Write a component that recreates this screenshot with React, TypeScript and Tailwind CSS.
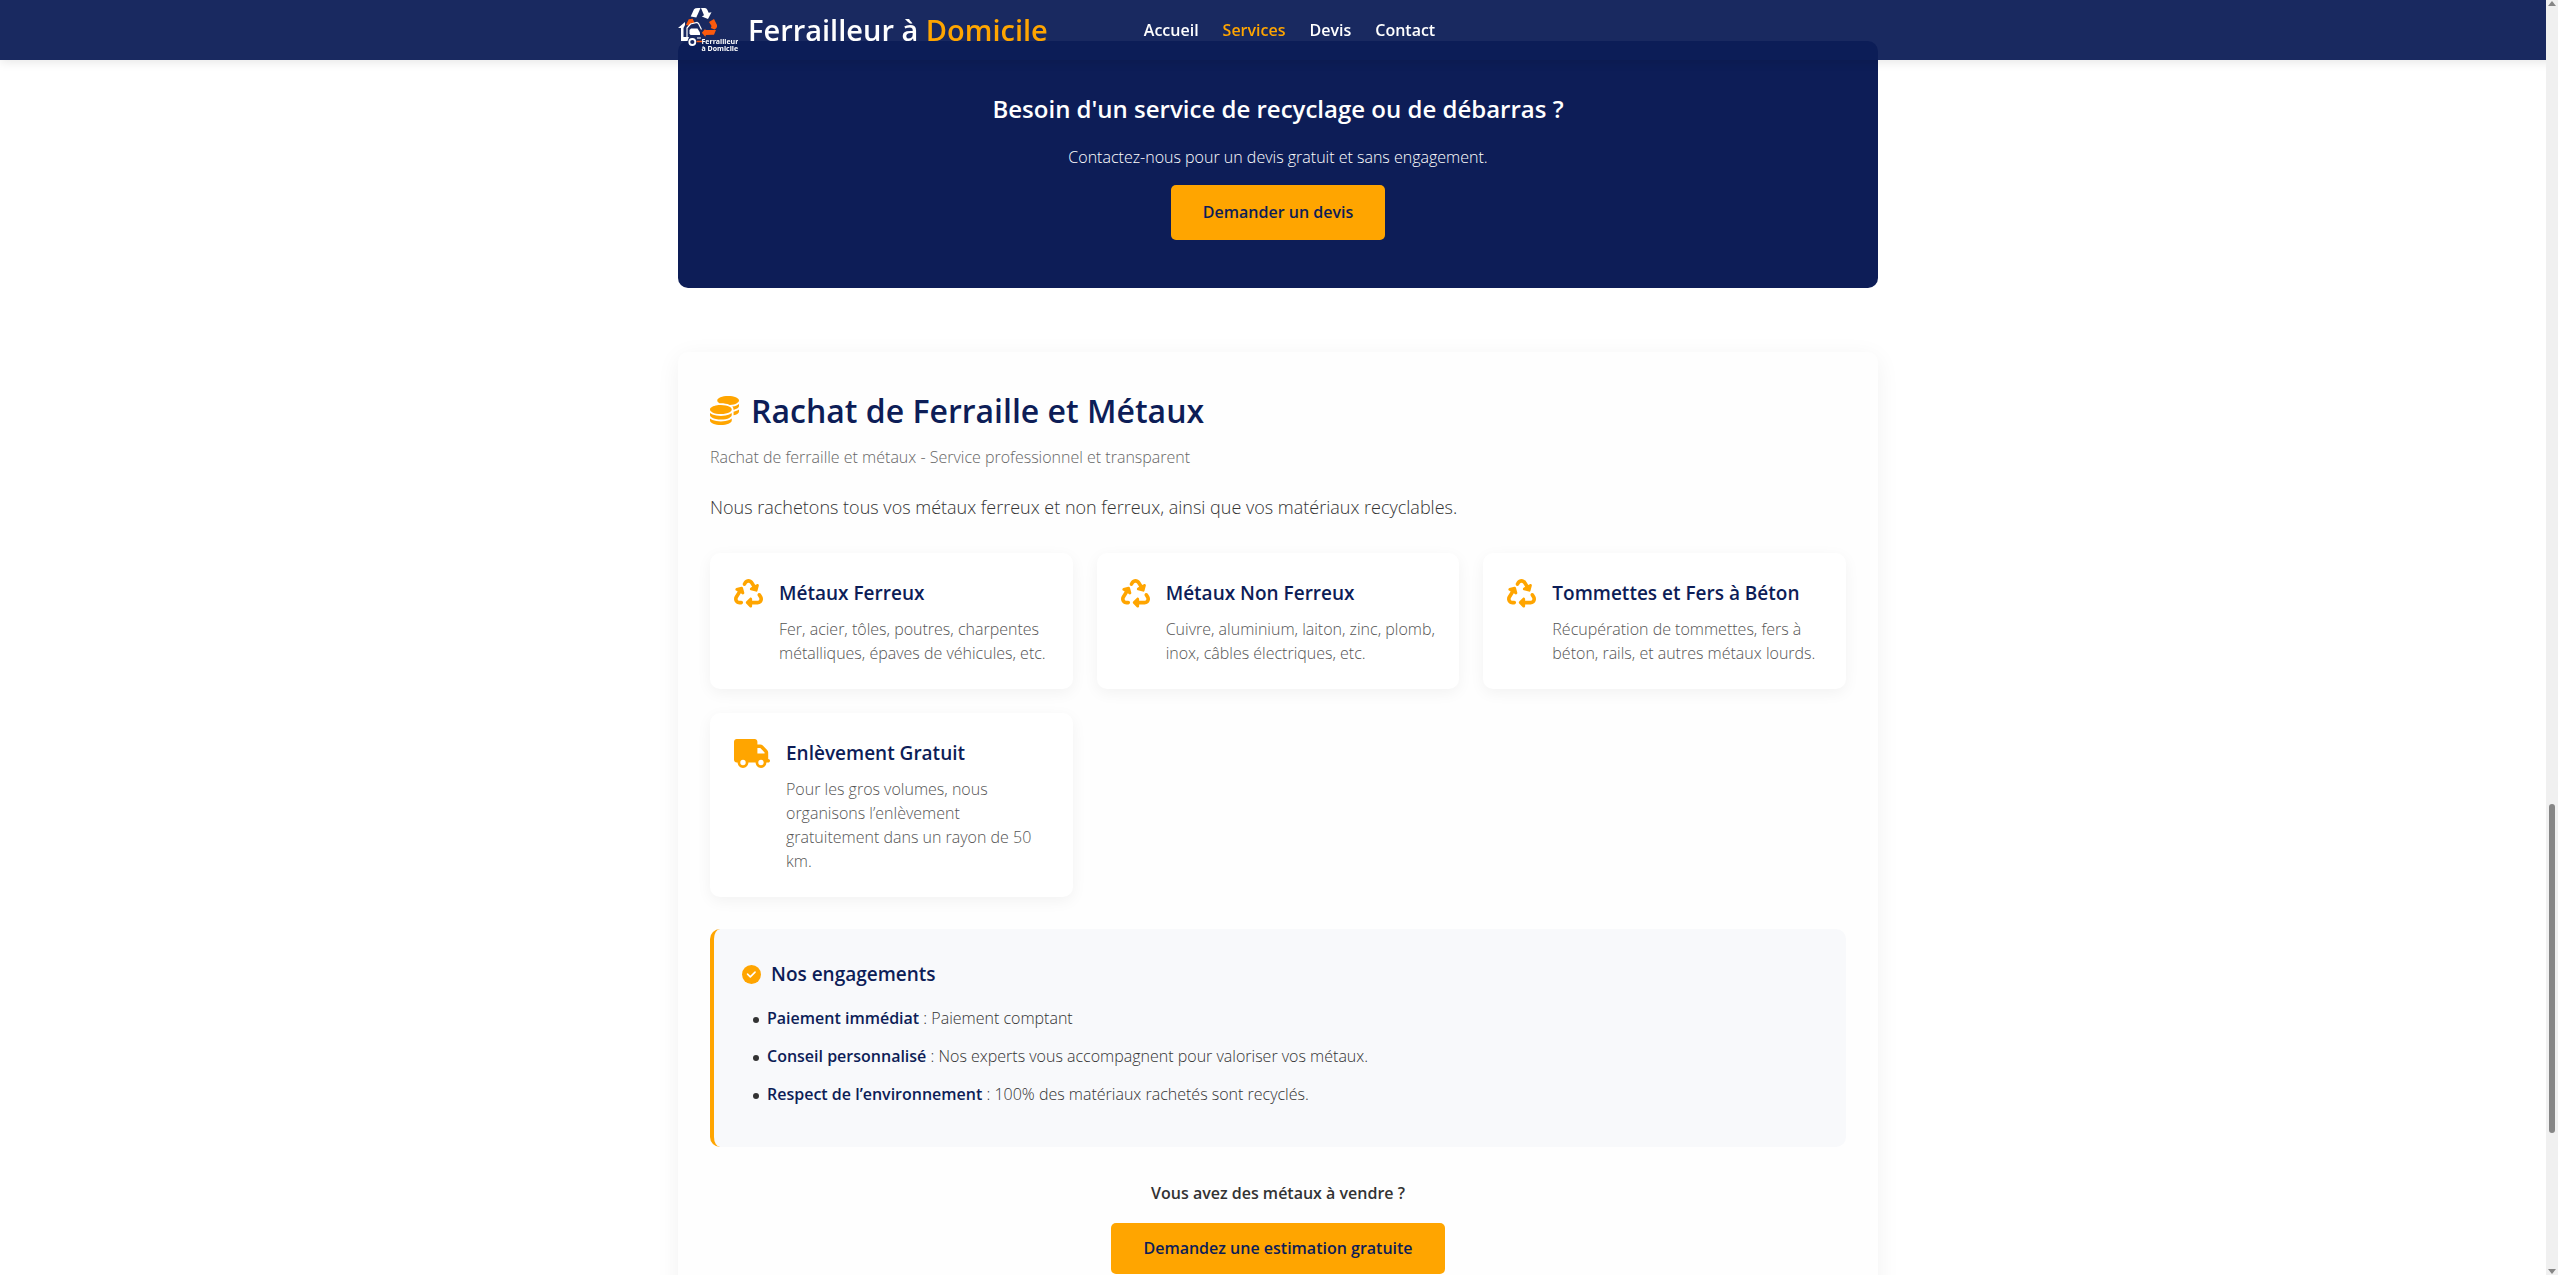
import type { IconType } from "react-icons";
import { FaCoins, FaRecycle, FaTruck } from "react-icons/fa6";

interface NavItem {
    label: string;
    href: string;
    active?: boolean;
}

interface ServiceItem {
    title: string;
    description: string;
    icon: IconType;
    iconClass: string;
}

const navItems: NavItem[] = [
    { label: "Accueil", href: "#accueil" },
    { label: "Services", href: "#services", active: true },
    { label: "Devis", href: "#devis" },
    { label: "Contact", href: "#contact" },
];

const services: ServiceItem[] = [
    {
        title: "Métaux Ferreux",
        description:
            "Fer, acier, tôles, poutres, charpentes métalliques, épaves de véhicules, etc.",
        icon: FaRecycle,
        iconClass: "w-[29px]",
    },
    {
        title: "Métaux Non Ferreux",
        description:
            "Cuivre, aluminium, laiton, zinc, plomb, inox, câbles électriques, etc.",
        icon: FaRecycle,
        iconClass: "w-[29px]",
    },
    {
        title: "Tommettes et Fers à Béton",
        description:
            "Récupération de tommettes, fers à béton, rails, et autres métaux lourds.",
        icon: FaRecycle,
        iconClass: "w-[29px]",
    },
    {
        title: "Enlèvement Gratuit",
        description:
            "Pour les gros volumes, nous organisons l’enlèvement gratuitement dans un rayon de 50 km.",
        icon: FaTruck,
        iconClass: "w-9",
    },
];

const commitments = [
    { title: "Paiement immédiat", text: "Paiement comptant" },
    {
        title: "Conseil personnalisé",
        text: "Nos experts vous accompagnent pour valoriser vos métaux.",
    },
    {
        title: "Respect de l’environnement",
        text: "100% des matériaux rachetés sont recyclés.",
    },
];

function Logo() {
    return (
        <svg viewBox="0 0 60 60" className="size-[60px] shrink-0" aria-hidden="true">
            {/* recycling arrows */}
            <path d="M12.700 16.500 L16 9.300 Q17 8 20 8 H22.500 L18.300 17.500 Z" fill="#fff" />
            <path
                d="M23 8 H27 Q28.500 8 29.300 9.800 L30.700 12.700 L33.500 12.200 L30 19 L23.800 16.500 L26 15.300 Z"
                fill="#fff"
            />
            <path d="M31 22 L36 19 L39 25 Q39.500 27 38 28.500 L36.500 29.500 L32.800 28 L33.500 26 Z" fill="#fb5a0e" />
            <path d="M23.800 32.700 L27.300 28.700 V30 L38 30 L36 34.700 L28 35 L27.300 36.700 Z" fill="#fb5a0e" />
            <path d="M8 25 L10.700 19.300 L14.700 18.700 L16.700 23.500 L13.500 22.700 L11.300 25.800 Z" fill="#fb5a0e" />
            {/* house and truck */}
            <path d="M0 28 L7 22 V25 L5.500 28 V37 H11 L9.500 41 H3 V28 Z" fill="#fff" />
            <path
                d="M9 37.500 V28 L12.500 24 L19 22.500 L20.500 23.500 L23.500 29.500 M19 38 H23"
                fill="none"
                stroke="#fff"
                strokeWidth="1.200"
            />
            <path d="M11.500 30 L13 28.500 H19.500 L22 32.500 V35 H12.500 L11.500 33.500 Z" fill="#fff" />
            <path d="M18.500 41.500 H24" stroke="#fb5a0e" strokeWidth="1.500" />
            <circle cx="14.300" cy="42" r="3" fill="#19285f" stroke="#fff" strokeWidth="1.800" />
            <g fill="#fff" fontFamily="Open Sans, sans-serif" fontSize="7" fontWeight="700">
                <text x="23.500" y="44">
                    Ferrailleur
                </text>
                <text x="23.500" y="51">
                    à Domicile
                </text>
            </g>
        </svg>
    );
}

function CheckIcon() {
    return (
        <svg viewBox="0 0 24 24" className="size-[19px] shrink-0" aria-hidden="true">
            <circle cx="12" cy="12" r="12" fill="#ffa500" />
            <path
                d="M7 11.500 L10.500 15 L16.500 9"
                fill="none"
                stroke="#fff"
                strokeWidth="2"
                strokeLinecap="round"
                strokeLinejoin="round"
            />
        </svg>
    );
}

function Header() {
    return (
        <header className="fixed inset-x-0 top-0 z-10 h-[60px] bg-[#0d1d57]/95 pr-0.5 text-white shadow-[0_2px_10px_rgba(0,0,0,0.1)]">
            <div className="mx-auto flex h-full max-w-[1200px] items-center">
                <a href="#accueil" className="flex items-center gap-2.5 text-[29px] font-semibold">
                    <Logo />
                    <span>
                        Ferrailleur à <span className="text-[#ffa500]">Domicile</span>
                    </span>
                </a>
                <nav className="ml-24">
                    <ul className="flex gap-6 font-semibold">
                        {navItems.map((item) => (
                            <li key={item.label}>
                                <a
                                    href={item.href}
                                    className={item.active ? "text-[#ffa500]" : "text-white"}
                                >
                                    {item.label}
                                </a>
                            </li>
                        ))}
                    </ul>
                </nav>
            </div>
        </header>
    );
}

function QuoteBanner() {
    return (
        <section className="rounded-[10px] bg-[#0d1d57] px-8 py-12 text-center text-white">
            <h2 className="text-2xl leading-10 font-semibold">
                Besoin d'un service de recyclage ou de débarras ?
            </h2>
            <p className="mt-4 font-light">
                Contactez-nous pour un devis gratuit et sans engagement.
            </p>
            <div className="mt-4 flex justify-center">
                <a
                    href="#devis"
                    className="rounded-[5px] bg-[#ffa500] px-8 py-4 leading-[23px] font-semibold text-[#0d1d57]"
                >
                    Demander un devis
                </a>
            </div>
        </section>
    );
}

function ServiceCard({ item }: Readonly<{ item: ServiceItem }>) {
    const Icon = item.icon;

    return (
        <li className="flex items-start gap-4 rounded-[10px] bg-white p-6 shadow-[0_4px_15px_rgba(0,0,0,0.05)]">
            <Icon className={`mt-0.5 h-[29px] shrink-0 text-[#ffa500] ${item.iconClass}`} />
            <div>
                <h3 className="text-[19px] leading-8 font-semibold text-[#0d1d57]">
                    {item.title}
                </h3>
                <p className="mt-2 font-light text-[#555]">{item.description}</p>
            </div>
        </li>
    );
}

function Commitments() {
    return (
        <div className="mt-8 rounded-[10px] border-l-4 border-[#ffa500] bg-[#f8f9fb] p-7">
            <h3 className="flex items-center gap-2.5 text-[19px] leading-[34px] font-semibold text-[#0d1d57]">
                <CheckIcon />
                Nos engagements
            </h3>
            <ul className="mt-3.5 pl-[11px]">
                {commitments.map((item) => (
                    <li
                        key={item.title}
                        className="mb-3 leading-[26px] font-light before:mr-2 before:inline-block before:size-1.5 before:rounded-full before:bg-[#333] before:align-middle"
                    >
                        <strong className="font-semibold text-[#0d1d57]">{item.title}</strong> :{" "}
                        {item.text}
                    </li>
                ))}
            </ul>
        </div>
    );
}

function Scrollbar() {
    return (
        <div
            className="fixed inset-y-0 right-0 z-20 flex w-3 flex-col items-center bg-[#f0f0f0]"
            aria-hidden="true"
        >
            <svg viewBox="0 0 8 6" className="h-1.5 w-2">
                <path d="M4 1 L8 6 H0 Z" fill="#868686" />
            </svg>
            <div className="grow-[798]" />
            <div className="w-1.5 grow-[329] rounded-full bg-[#868686]" />
            <div className="grow-[136]" />
            <svg viewBox="0 0 8 6" className="h-1.5 w-2">
                <path d="M4 5 L8 0 H0 Z" fill="#868686" />
            </svg>
        </div>
    );
}

export default function App() {
    return (
        <div className="h-screen overflow-hidden bg-white pr-0.5 font-['Open_Sans',sans-serif] text-base text-[#333]">
            <Header />
            <main className="mx-auto max-w-[1200px] pt-[41px]">
                <QuoteBanner />
                <section className="mt-16 rounded-[10px] bg-[#fefefe] px-8 pt-8 pb-16 shadow-[0_5px_25px_rgba(0,0,0,0.06)]">
                    <h2 className="flex items-center gap-3 text-[32px] leading-[53px] font-semibold text-[#0d1d57]">
                        <FaCoins className="size-[29px] text-[#ffa500]" />
                        Rachat de Ferraille et Métaux
                    </h2>
                    <p className="mt-2 font-light text-[#666]">
                        Rachat de ferraille et métaux - Service professionnel et transparent
                    </p>
                    <p className="mt-6 text-lg font-light">
                        Nous rachetons tous vos métaux ferreux et non ferreux, ainsi que vos
                        matériaux recyclables.
                    </p>
                    <ul className="mt-8 grid grid-cols-3 gap-6">
                        {services.map((item) => (
                            <ServiceCard key={item.title} item={item} />
                        ))}
                    </ul>
                    <Commitments />
                    <div className="mt-8 flex flex-col items-center gap-4 font-semibold">
                        <p className="leading-7">Vous avez des métaux à vendre ?</p>
                        <a
                            href="#devis"
                            className="rounded-[5px] bg-[#ffa500] px-8 py-3.5 leading-[23px] text-[#0d1d57]"
                        >
                            Demandez une estimation gratuite
                        </a>
                    </div>
                </section>
            </main>
            <Scrollbar />
        </div>
    );
}
